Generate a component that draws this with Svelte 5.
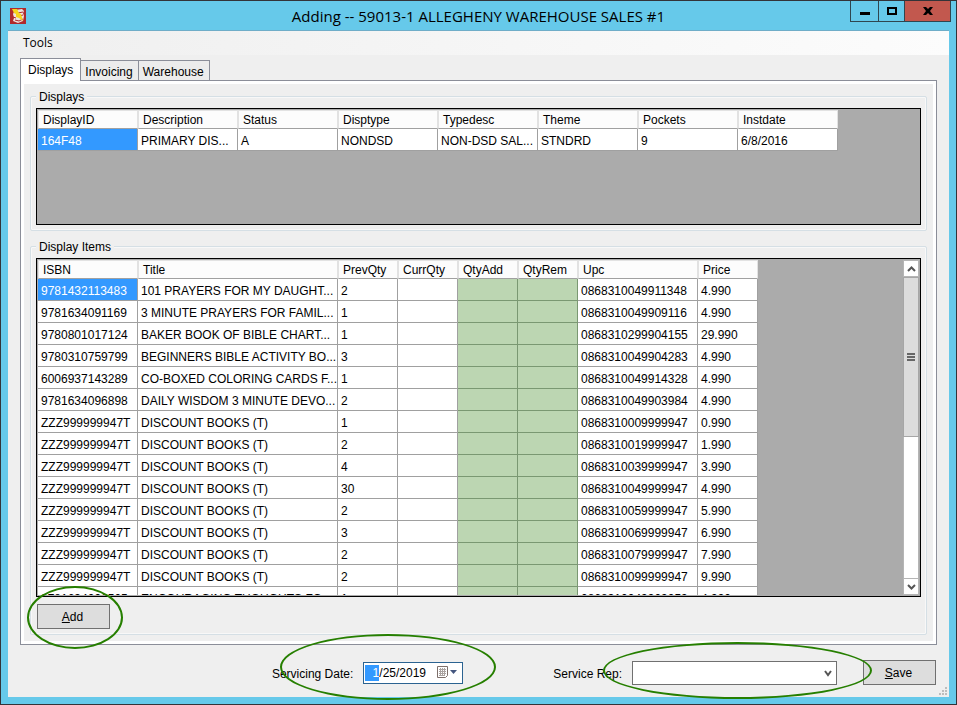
<script>
	const displayColumns = [
		{ name: 'DisplayID', width: 100 },
		{ name: 'Description', width: 100 },
		{ name: 'Status', width: 100 },
		{ name: 'Disptype', width: 100 },
		{ name: 'Typedesc', width: 100 },
		{ name: 'Theme', width: 100 },
		{ name: 'Pockets', width: 100 },
		{ name: 'Instdate', width: 100 }
	];
	const displays = [
		['164F48', 'PRIMARY DIS...', 'A', 'NONDSD', 'NON-DSD SAL...', 'STNDRD', '9', '6/8/2016']
	];

	const itemColumns = [
		{ name: 'ISBN', width: 100 },
		{ name: 'Title', width: 200 },
		{ name: 'PrevQty', width: 60 },
		{ name: 'CurrQty', width: 60 },
		{ name: 'QtyAdd', width: 60, editable: true },
		{ name: 'QtyRem', width: 60, editable: true },
		{ name: 'Upc', width: 120 },
		{ name: 'Price', width: 60 }
	];
	const items = [
		['9781432113483', '101 PRAYERS FOR MY DAUGHT...', '2', '', '', '', '0868310049911348', '4.990'],
		['9781634091169', '3 MINUTE PRAYERS FOR FAMIL...', '1', '', '', '', '0868310049909116', '4.990'],
		['9780801017124', 'BAKER BOOK OF BIBLE CHART...', '1', '', '', '', '0868310299904155', '29.990'],
		['9780310759799', 'BEGINNERS BIBLE ACTIVITY BO...', '3', '', '', '', '0868310049904283', '4.990'],
		['6006937143289', 'CO-BOXED COLORING CARDS F...', '1', '', '', '', '0868310049914328', '4.990'],
		['9781634096898', 'DAILY WISDOM 3 MINUTE DEVO...', '2', '', '', '', '0868310049903984', '4.990'],
		['ZZZ999999947T', 'DISCOUNT BOOKS (T)', '1', '', '', '', '0868310009999947', '0.990'],
		['ZZZ999999947T', 'DISCOUNT BOOKS (T)', '2', '', '', '', '0868310019999947', '1.990'],
		['ZZZ999999947T', 'DISCOUNT BOOKS (T)', '4', '', '', '', '0868310039999947', '3.990'],
		['ZZZ999999947T', 'DISCOUNT BOOKS (T)', '30', '', '', '', '0868310049999947', '4.990'],
		['ZZZ999999947T', 'DISCOUNT BOOKS (T)', '2', '', '', '', '0868310059999947', '5.990'],
		['ZZZ999999947T', 'DISCOUNT BOOKS (T)', '3', '', '', '', '0868310069999947', '6.990'],
		['ZZZ999999947T', 'DISCOUNT BOOKS (T)', '2', '', '', '', '0868310079999947', '7.990'],
		['ZZZ999999947T', 'DISCOUNT BOOKS (T)', '2', '', '', '', '0868310099999947', '9.990'],
		['9781634096505', 'ENCOURAGING THOUGHTS FO...', '1', '', '', '', '0868310049909059', '4.990']
	];

	const tabs = ['Displays', 'Invoicing', 'Warehouse'];
	let activeTab = $state('Displays');
	let month = $state('1');
	let rest = $state('/25/2019');
	let rep = $state('');
</script>

{#snippet grid(columns, rows)}
	<table style="width: {columns.reduce((sum, c) => sum + c.width, 0)}px">
		<colgroup>
			{#each columns as col}
				<col style="width: {col.width}px" />
			{/each}
		</colgroup>
		<thead>
			<tr>
				{#each columns as col}
					<th scope="col">{col.name}</th>
				{/each}
			</tr>
		</thead>
		<tbody>
			{#each rows as row, r}
				<tr>
					{#each row as cell, c}
						<td class:selected={r === 0 && c === 0} class:editable={columns[c].editable}>{cell}</td>
					{/each}
				</tr>
			{/each}
		</tbody>
	</table>
{/snippet}

<div class="window">
	<header class="titlebar">
		<svg class="app-icon" width="16" height="16" viewBox="0 0 16 16" aria-hidden="true">
			<rect width="16" height="16" fill="#b02a2c" />
			<path d="M5 2l7-1 2 2-1 2 1 3-1 5-5 2-5-2 1-3-1-4z" fill="#efe2de" />
			<path d="M8 5l5-1M9 8l4-1M5 12l4 1 4-2M3 9l3 1" stroke="#b02a2c" stroke-width="1" fill="none" />
			<path d="M2 1h5l2 4 2 1 2 7-4-3-3-1 0-3-2-1z" fill="#f6d51c" />
		</svg>
		<h1>Adding -- 59013-1 ALLEGHENY WAREHOUSE SALES #1</h1>
		<div class="window-buttons">
			<button class="minimize" aria-label="Minimize">
				<svg width="10" height="10" viewBox="0 0 10 10"><path d="M0 6h10v3H0z" /></svg>
			</button>
			<button class="maximize" aria-label="Maximize">
				<svg width="10" height="8" viewBox="0 0 10 8"><path d="M1 1h8v6H1z" fill="none" stroke="#000" stroke-width="2" /></svg>
			</button>
			<button class="close" aria-label="Close">
				<svg width="10" height="8" viewBox="0 0 10 8"><path d="M0 0h3l2 2 2-2h3L7 4l3 4H7L5 6 3 8H0l3-4z" /></svg>
			</button>
		</div>
	</header>

	<main>
		<nav class="menu"><button>Tools</button></nav>

		<div class="tabs" role="tablist">
			{#each tabs as tab}
				<button role="tab" aria-selected={tab === activeTab} class:active={tab === activeTab} onclick={() => (activeTab = tab)}>{tab}</button>
			{/each}
		</div>

		<div class="page" role="tabpanel">
			<section class="group">
				<h2>Displays</h2>
				<div class="grid">
					{@render grid(displayColumns, displays)}
				</div>
			</section>

			<section class="group items">
				<h2>Display Items</h2>
				<div class="grid">
					<div class="viewport">
						{@render grid(itemColumns, items)}
					</div>
					<div class="scrollbar">
						<button aria-label="Scroll up">
							<svg width="9" height="6" viewBox="0 0 9 6"><path d="M1 5l3.500-3.500L8 5" /></svg>
						</button>
						<div class="thumb"><i></i><i></i><i></i></div>
						<button class="down" aria-label="Scroll down">
							<svg width="9" height="6" viewBox="0 0 9 6"><path d="M1 1l3.500 3.500L8 1" /></svg>
						</button>
					</div>
				</div>
				<div class="marked mark-add">
					<button class="push"><span><u>A</u>dd</span></button>
				</div>
			</section>
		</div>

		<footer>
			<label for="month">Servicing Date:</label>
			<div class="marked mark-date">
				<div class="date">
					<input id="month" class="month" bind:value={month} />
					<input class="rest" aria-label="Day and year" bind:value={rest} />
					<button aria-label="Open calendar">
						<svg width="21" height="13" viewBox="0 0 21 13">
							<path d="M.5.5h10v9l-2 2h-8z" fill="#fff" stroke="#7d6f6a" />
							<path d="M2 3.500h7M2 5.500h7M2 7.500h7M2 9.500h5M3.500 2v8M5.500 2v8M7.500 2v8" stroke="#aaa3a0" stroke-width="1" />
							<path d="M13 4h7l-3.500 4z" fill="#44567f" />
						</svg>
					</button>
				</div>
			</div>
			<label class="rep-label" for="rep">Service Rep:</label>
			<div class="marked mark-rep">
				<select id="rep" bind:value={rep}>
					<option value=""></option>
				</select>
				<svg class="arrow" width="8" height="7" viewBox="0 0 8 7" aria-hidden="true"><path d="M1 1l3 4 3-4" /></svg>
			</div>
			<button class="push"><span><u>S</u>ave</span></button>
			<svg class="grip" width="8" height="8" viewBox="0 0 8 8" aria-hidden="true">
				<path d="M6 0h2v2H6zM3 3h2v2H3zM6 3h2v2H6zM0 6h2v2H0zM3 6h2v2H3zM6 6h2v2H6z" fill="#bdbdbd" />
			</svg>
		</footer>
	</main>
</div>

<style>
	:global(body) {
		margin: 0;
	}

	.window {
		box-sizing: border-box;
		height: 100vh;
		display: flex;
		flex-direction: column;
		padding: 0 7px 7px;
		border: 1px solid #333338;
		background: #66c9ea;
		font-family: 'Liberation Sans', Arial, sans-serif;
		font-size: 12px;
		line-height: 16px;
		color: #000;
	}

	button,
	input,
	select {
		box-sizing: border-box;
		margin: 0;
		padding: 0;
		border: 0;
		border-radius: 0;
		background: none;
		font: inherit;
		color: inherit;
	}

	h1,
	h2 {
		margin: 0;
		font-size: 12px;
		font-weight: normal;
	}

	.titlebar {
		position: relative;
		display: flex;
		align-items: center;
		height: 29px;
		border-bottom: 1px solid #6fadc8;
	}

	.app-icon {
		margin-left: 2px;
	}

	h1 {
		flex: 1;
		margin-right: 18px;
		font-family: 'Open Sans', 'Noto Sans', sans-serif;
		font-size: 15px;
		line-height: 28px;
		text-align: center;
	}

	.window-buttons {
		position: absolute;
		top: 0;
		right: -2px;
		display: flex;
		height: 20px;
		border: 1px solid #2f4650;
		border-top: 0;
	}

	.window-buttons button {
		display: flex;
		align-items: center;
		justify-content: center;
		width: 28px;
		border-right: 1px solid #2f4650;
	}

	.window-buttons .maximize {
		width: 26px;
	}

	.window-buttons .close {
		width: 45px;
		border-right: 0;
		background: #c2584e;
	}

	main {
		flex: 1;
		min-height: 0;
		display: flex;
		flex-direction: column;
		background: #efefef;
	}

	.menu {
		height: 24px;
		background: linear-gradient(to right, #efefef, #fcfcfc);
	}

	.menu button {
		margin-left: 15px;
		font-family: 'Open Sans', 'Noto Sans', sans-serif;
		font-size: 12px;
		line-height: 24px;
	}

	.tabs {
		position: relative;
		display: flex;
		align-items: flex-end;
		height: 22px;
		margin: 3px 12px 0;
	}

	.tabs button {
		height: 20px;
		padding: 2px 5px 0 4px;
		border: 1px solid #8b8e99;
		border-width: 1px 1px 0 0;
		background: #ececec;
	}

	.tabs .active {
		height: 23px;
		margin-bottom: -1px;
		padding: 0 7px;
		border-left-width: 1px;
		background: #fff;
	}

	.page {
		flex: 1;
		min-height: 0;
		display: flex;
		flex-direction: column;
		gap: 5px;
		margin: 0 12px;
		padding: 5px 9px 9px;
		border: 1px solid #8b8e99;
		box-shadow: inset 0 0 0 3px #fff;
	}

	.group {
		display: flex;
		flex-direction: column;
		margin-top: 10px;
		padding: 0 5px 5px;
		border: 1px solid #d5dfe5;
		border-radius: 2px;
		box-shadow: inset 0 0 0 1px #f8f8f8;
	}

	.group h2 {
		align-self: flex-start;
		margin: -8px 0 3px;
		padding: 0 3px;
		background: #efefef;
	}

	.grid {
		display: flex;
		height: 113px;
		padding: 1px;
		border: 1px solid #000;
		background: #ababab;
		overflow: hidden;
	}

	.items {
		flex: 1;
		min-height: 0;
	}

	.items .grid {
		flex: 1;
		height: auto;
		min-height: 0;
	}

	.viewport {
		flex: 1;
		overflow: hidden;
	}

	table {
		table-layout: fixed;
		border-collapse: separate;
		border-spacing: 0;
		align-self: flex-start;
	}

	th,
	td {
		box-sizing: border-box;
		overflow: hidden;
		white-space: nowrap;
		text-align: left;
	}

	th {
		height: 19px;
		padding: 2px 0 0 4px;
		border: 1px solid #e2e2e2;
		border-bottom-color: #a0a0a0;
		background: #fcfcfc;
		font-weight: normal;
		line-height: 15px;
	}

	td {
		height: 22px;
		padding: 2px 0 0 3px;
		border: 1px solid #a0a0a0;
		border-width: 0 1px 1px 0;
		background: #fff;
	}

	.editable {
		border-color: #7a9872;
		background: #bcd6b2;
	}

	.selected {
		background: #3399ff;
		color: #fff;
	}

	.scrollbar {
		display: flex;
		flex-direction: column;
		width: 16px;
		background: #fff;
		box-shadow: inset 0 0 0 1px #b5b5b5;
	}

	.scrollbar button {
		display: flex;
		align-items: center;
		justify-content: center;
		height: 17px;
		border: 1px solid #b5b5b5;
	}

	.scrollbar .down {
		margin-top: auto;
	}

	.scrollbar path,
	.arrow path {
		fill: none;
		stroke: #555;
		stroke-width: 2;
	}

	.thumb {
		box-sizing: border-box;
		flex: 0 1 160px;
		display: flex;
		flex-direction: column;
		align-items: center;
		justify-content: center;
		gap: 1px;
		border: 1px solid #a6a6a6;
		background: #dcdcdc;
	}

	.thumb i {
		width: 8px;
		height: 2px;
		background: #666;
	}

	.push {
		width: 73px;
		height: 25px;
		padding-right: 2px;
		border: 1px solid #707070;
		background: #dddddd;
	}

	.marked {
		position: relative;
		display: flex;
	}

	/* green rings drawn over the fields the user has to fill in */
	.marked::after {
		content: '';
		position: absolute;
		z-index: 1;
		border: 2px solid #267f00;
		border-radius: 50%;
		pointer-events: none;
	}

	.mark-add {
		align-self: flex-start;
		margin: 7px 0 0 1px;
	}

	.mark-add::after {
		inset: -18px -13px -20px -10px;
	}

	.mark-date::after {
		inset: -28px -33px -16px -83px;
	}

	.mark-rep::after {
		inset: -19px -35px -14px -29px;
	}

	footer {
		position: relative;
		display: flex;
		align-items: center;
		justify-content: flex-end;
		height: 52px;
		padding: 3px 13px 0 0;
		box-sizing: border-box;
	}

	footer label {
		margin-right: 10px;
		padding-top: 2px;
	}

	.rep-label {
		margin-left: 90px;
	}

	.date {
		box-sizing: border-box;
		display: flex;
		align-items: center;
		width: 100px;
		height: 22px;
		padding: 0 4px 0 1px;
		border: 1px solid #2b6391;
		background: #fff;
	}

	.month {
		width: 14px;
		height: 16px;
		background: #3399ff;
		color: #fff;
		text-align: right;
	}

	.rest {
		flex: 1;
		min-width: 0;
	}

	.date button {
		display: flex;
	}

	select {
		appearance: none;
		width: 205px;
		height: 24px;
		border: 1px solid #707070;
		background: #fff;
	}

	.arrow {
		position: absolute;
		right: 5px;
		top: 9px;
		pointer-events: none;
	}

	footer .push {
		margin-left: 26px;
	}

	.grip {
		position: absolute;
		right: 2px;
		bottom: 2px;
	}
</style>
